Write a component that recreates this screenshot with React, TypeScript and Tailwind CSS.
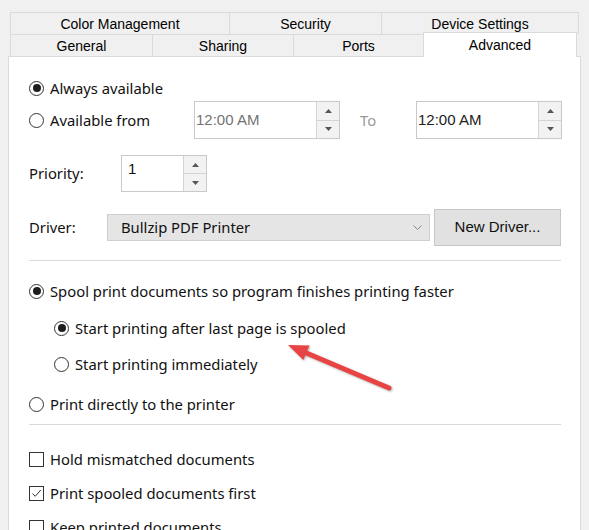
import React from "react";

const SANS = "font-['Noto_Sans',sans-serif]";
const ARIAL = "font-['Liberation_Sans',Arial,sans-serif]";

function Radio({ checked, label }: { checked?: boolean; label: string }) {
  return (
    <div className="flex items-center h-[20px]">
      <span className="w-[15px] h-[15px] rounded-full border border-[#333] flex items-center justify-center bg-white">
        {checked && <span className="w-[8px] h-[8px] rounded-full bg-[#1e1e1e]" />}
      </span>
      <span className="ml-[6px] text-[14.8px] text-[#111]">{label}</span>
    </div>
  );
}

function Check({ checked, label }: { checked?: boolean; label: string }) {
  return (
    <div className="flex items-center h-[20px]">
      <span className="w-[15px] h-[15px] border border-[#333] flex items-center justify-center bg-white">
        {checked && (
          <svg width="11" height="11" viewBox="0 0 11 11" fill="none" stroke="#333" strokeWidth="1">
            <polyline points="1.5,5.5 4.2,8.3 9.8,2" />
          </svg>
        )}
      </span>
      <span className="ml-[6px] text-[14.8px] text-[#111]">{label}</span>
    </div>
  );
}

function SpinButtons() {
  return (
    <div className="flex flex-col w-[23px] h-full border-l border-[#d4d4d4]">
      <div className="flex-1 bg-[#f2f2f2] border-b border-[#d4d4d4] flex items-center justify-center">
        <svg width="7" height="4" viewBox="0 0 7 4"><polygon points="0,4 7,4 3.5,0" fill="#555" /></svg>
      </div>
      <div className="flex-1 bg-[#f2f2f2] flex items-center justify-center">
        <svg width="7" height="4" viewBox="0 0 7 4"><polygon points="0,0 7,0 3.5,4" fill="#555" /></svg>
      </div>
    </div>
  );
}

function TimeBox({ dim }: { dim?: boolean }) {
  return (
    <div className="flex w-[146px] h-[38px] border border-[#c9c9c9] bg-white">
      <div className={`flex-1 flex items-center pl-[1px] text-[15px] ${ARIAL} ${dim ? "text-[#737373]" : "text-[#222]"}`}>
        12:00 AM
      </div>
      <SpinButtons />
    </div>
  );
}

const TAB = `flex items-center justify-center border-t border-l border-[#dadada] text-[14px] text-black ${ARIAL}`;

export default function App() {
  return (
    <div className={`relative w-[589px] h-[530px] overflow-hidden bg-[#f0f0f0] ${SANS}`}>
      {/* Onglets */}
      <div className="pt-[12px] pl-[10px]">
        <div className="flex h-[22px]">
          <div className={`${TAB} w-[219px] pt-[1px]`}>Color Management</div>
          <div className={`${TAB} w-[152px] pt-[1px]`}>Security</div>
          <div className={`${TAB} w-[198px] border-r pt-[1px]`}>Device Settings</div>
        </div>
        <div className="flex h-[22px] items-end">
          <div className={`${TAB} w-[142px] h-[22px] pt-[2px]`}>General</div>
          <div className={`${TAB} w-[141px] h-[22px] pt-[2px]`}>Sharing</div>
          <div className={`${TAB} w-[130px] h-[22px] pt-[2px]`}>Ports</div>
          <div className={`${TAB} relative z-10 w-[154px] h-[25px] -mb-px bg-white border-r`}>Advanced</div>
        </div>
      </div>

      {/* Panneau */}
      <div className="ml-[8px] w-[573px] h-[500px] bg-white border border-[#dadada] pl-[20px] pt-[21px]">
        <Radio checked label="Always available" />

        <div className="flex items-center h-[38px] mt-[3px]">
          <div className="w-[165px]">
            <Radio label="Available from" />
          </div>
          <TimeBox dim />
          <span className="w-[76px] pl-[20px] text-[14.8px] text-[#9a9a9a]">To</span>
          <TimeBox />
        </div>

        <div className="flex items-center h-[37px] mt-[16px]">
          <span className="w-[92px] text-[14.8px] text-[#111]">Priority:</span>
          <div className="flex w-[86px] h-[37px] border border-[#c9c9c9] bg-white">
            <div className={`flex-1 pl-[6px] pt-[2px] text-[15px] text-[#111] ${ARIAL}`}>1</div>
            <SpinButtons />
          </div>
        </div>

        <div className="flex items-center h-[37px] mt-[17px]">
          <span className="w-[78px] text-[14.8px] text-[#111]">Driver:</span>
          <div className="flex items-center justify-between w-[323px] h-[27px] bg-[#e5e5e5] border border-[#cfcfcf] pl-[13px] pr-[7px]">
            <span className="text-[14.8px] text-[#111]">Bullzip PDF Printer</span>
            <svg width="9" height="5" viewBox="0 0 9 5" fill="none" stroke="#8a8a8a" strokeWidth="1">
              <polyline points="0.5,0.5 4.5,4.5 8.5,0.5" />
            </svg>
          </div>
          <div className={`ml-[4px] w-[127px] h-[37px] flex items-center justify-center bg-[#e1e1e1] border border-[#c6c6c6] text-[15px] text-[#111] ${ARIAL}`}>
            New Driver...
          </div>
        </div>

        <div className="w-[532px] h-px bg-[#d9d9d9] mt-[14px]" />

        <div className="mt-[20px]">
          <Radio checked label="Spool print documents so program finishes printing faster" />
        </div>
        <div className="mt-[17px] pl-[25px]">
          <Radio checked label="Start printing after last page is spooled" />
        </div>
        <div className="mt-[16px] pl-[25px]">
          <Radio label="Start printing immediately" />
        </div>
        <div className="mt-[20px]">
          <Radio label="Print directly to the printer" />
        </div>

        <div className="w-[532px] h-px bg-[#d9d9d9] mt-[10px]" />

        <div className="mt-[24px]">
          <Check label="Hold mismatched documents" />
        </div>
        <div className="mt-[14px]">
          <Check checked label="Print spooled documents first" />
        </div>
        <div className="mt-[14px]">
          <Check label="Keep printed documents" />
        </div>
      </div>

      {/* Flèche d'annotation */}
      <svg
        className="absolute left-0 top-0 pointer-events-none drop-shadow-[1px_1px_1px_rgba(0,0,0,0.3)]"
        width="589"
        height="530"
        viewBox="0 0 589 530"
      >
        <line x1="389" y1="388" x2="304" y2="352" stroke="#e84444" strokeWidth="5" strokeLinecap="round" />
        <polygon points="288,345 309.5,345.5 303.3,360.1" fill="#e84444" />
      </svg>
    </div>
  );
}
